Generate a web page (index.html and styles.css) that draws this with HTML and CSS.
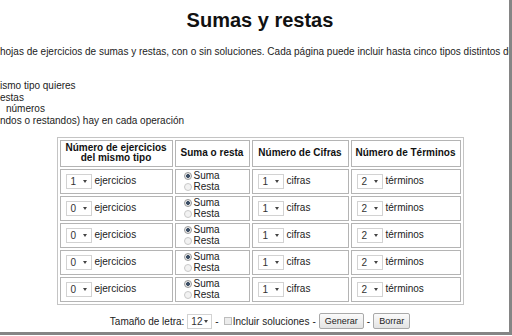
FILE: index.html
```html
<!DOCTYPE html>
<html lang="es">
<head>
<meta charset="UTF-8" />
<title>Sumas y restas</title>
<link rel="stylesheet" href="styles.css">
</head>
<body>
<div class="frame">
  <h1 class="title">Sumas y restas</h1>

  <p class="intro">hojas de ejercicios de sumas y restas, con o sin soluciones. Cada página puede incluir hasta cinco tipos distintos de</p>

  <ul class="choices">
    <li>ismo tipo quieres</li>
    <li>estas</li>
    <li><span class="gap"></span>números</li>
    <li>ndos o restandos) hay en cada operación</li>
  </ul>

  <div class="center">
    <table class="grid">
      <colgroup>
        <col class="c1"><col class="c2"><col class="c3"><col class="c4">
      </colgroup>
      <thead>
        <tr>
          <th>Número de ejercicios<br>del mismo tipo</th>
          <th>Suma o resta</th>
          <th>Número de Cifras</th>
          <th>Número de Términos</th>
        </tr>
      </thead>
      <tbody>
        <tr>
          <td><span class="sel">1<i class="arrow"></i></span>ejercicios</td>
          <td class="ops"><span class="opt"><span class="radio on"></span>Suma</span><span class="opt"><span class="radio"></span>Resta</span></td>
          <td><span class="sel">1<i class="arrow"></i></span>cifras</td>
          <td><span class="sel">2<i class="arrow"></i></span>términos</td>
        </tr>
        <tr>
          <td><span class="sel">0<i class="arrow"></i></span>ejercicios</td>
          <td class="ops"><span class="opt"><span class="radio on"></span>Suma</span><span class="opt"><span class="radio"></span>Resta</span></td>
          <td><span class="sel">1<i class="arrow"></i></span>cifras</td>
          <td><span class="sel">2<i class="arrow"></i></span>términos</td>
        </tr>
        <tr>
          <td><span class="sel">0<i class="arrow"></i></span>ejercicios</td>
          <td class="ops"><span class="opt"><span class="radio on"></span>Suma</span><span class="opt"><span class="radio"></span>Resta</span></td>
          <td><span class="sel">1<i class="arrow"></i></span>cifras</td>
          <td><span class="sel">2<i class="arrow"></i></span>términos</td>
        </tr>
        <tr>
          <td><span class="sel">0<i class="arrow"></i></span>ejercicios</td>
          <td class="ops"><span class="opt"><span class="radio on"></span>Suma</span><span class="opt"><span class="radio"></span>Resta</span></td>
          <td><span class="sel">1<i class="arrow"></i></span>cifras</td>
          <td><span class="sel">2<i class="arrow"></i></span>términos</td>
        </tr>
        <tr>
          <td><span class="sel">0<i class="arrow"></i></span>ejercicios</td>
          <td class="ops"><span class="opt"><span class="radio on"></span>Suma</span><span class="opt"><span class="radio"></span>Resta</span></td>
          <td><span class="sel">1<i class="arrow"></i></span>cifras</td>
          <td><span class="sel">2<i class="arrow"></i></span>términos</td>
        </tr>
      </tbody>
    </table>

    <div class="footer">
      <span>Tamaño de letra:</span>
      <span class="sel small">12<i class="arrow"></i></span>
      <span class="dash">-</span>
      <span class="check"></span><span>Incluir soluciones</span>
      <span class="dash">-</span>
      <span class="btn">Generar</span>
      <span class="dash">-</span>
      <span class="btn">Borrar</span>
    </div>
  </div>
</div>
</body>
</html>
```

FILE: styles.css
```css
/* Base */
* {
  margin: 0;
  padding: 0;
  box-sizing: border-box;
}

body {
  background: #fff;
  font-family: 'Liberation Sans', Arial, sans-serif;
  font-size: 10px;
  color: #222;
  overflow: hidden;
}

/* Browser window edge (scrolled page) */
.frame {
  width: 512px;
  height: 335px;
  border-right: 3px solid #858585;
  border-bottom: 3px solid #858585;
  overflow: hidden;
}

.title {
  margin: 9px 0 0 11px;
  font-size: 20px;
  line-height: 23px;
  font-weight: 700;
  color: #111;
  text-align: center;
}

.intro {
  margin-top: 14px;
  line-height: 12px;
  white-space: nowrap;
}

.choices {
  list-style: none;
  margin-top: 22px;
  line-height: 11.7px;
  white-space: nowrap;
}
.choices .gap {
  display: inline-block;
  width: 6px;
}

.center {
  margin-left: 11px;
  display: flex;
  flex-direction: column;
  align-items: center;
}

/* Options table */
.grid {
  margin-top: 10px;
  table-layout: fixed;
  width: 407px;
  border-collapse: separate;
  border-spacing: 2px;
  border: 1px solid #c4c4c4;
}
.grid col.c1 { width: 113px; }
.grid col.c2 { width: 75px; }
.grid col.c3 { width: 97px; }
.grid col.c4 { width: 110px; }

.grid th,
.grid td {
  border: 1px solid #b4b4b4;
  vertical-align: middle;
}

.grid th {
  height: 27px;
  font-weight: 700;
  color: #111;
  line-height: 10.5px;
  text-align: center;
  padding: 0;
  white-space: nowrap;
}

.grid td {
  height: 25px;
  padding: 0 0 0 5px;
  white-space: nowrap;
}

.ops .opt {
  display: flex;
  align-items: center;
  line-height: 11px;
  padding-left: 3px;
}

.radio {
  display: inline-block;
  width: 8px;
  height: 8px;
  margin-right: 2px;
  border-radius: 50%;
  border: 1px solid #c9c9c9;
  background: #f2f2f2;
}
.radio.on {
  border-color: #9a9a9a;
  background: radial-gradient(circle, #3d4f66 0, #3d4f66 1.6px, #e8e8e8 2.2px);
}

/* Fake select boxes */
.sel {
  display: inline-flex;
  align-items: center;
  justify-content: space-between;
  vertical-align: middle;
  width: 26px;
  height: 15px;
  margin-right: 3px;
  padding: 0 4px;
  border: 1px solid #d2d2d2;
  background: #fff;
  color: #333;
  line-height: 13px;
}
.arrow {
  width: 0;
  height: 0;
  border-left: 2.5px solid transparent;
  border-right: 2.5px solid transparent;
  border-top: 3px solid #444;
}

/* Bottom controls */
.footer {
  margin-top: 8px;
  display: flex;
  align-items: center;
  height: 17px;
  gap: 3px;
  white-space: nowrap;
}
.footer .sel.small {
  margin: 0;
  width: 25px;
  padding: 0 3px;
}
.check {
  display: inline-block;
  width: 8px;
  height: 8px;
  border: 1px solid #bdbdbd;
  background: #ececec;
  margin: 0 -2px 0 2px;
}
.btn {
  display: inline-block;
  height: 16px;
  padding: 0 5px;
  line-height: 14px;
  font-size: 9px;
  color: #222;
  border: 1px solid #a9a9a9;
  border-radius: 2px;
  background: linear-gradient(#fbfbfb, #e3e3e3);
}
```
